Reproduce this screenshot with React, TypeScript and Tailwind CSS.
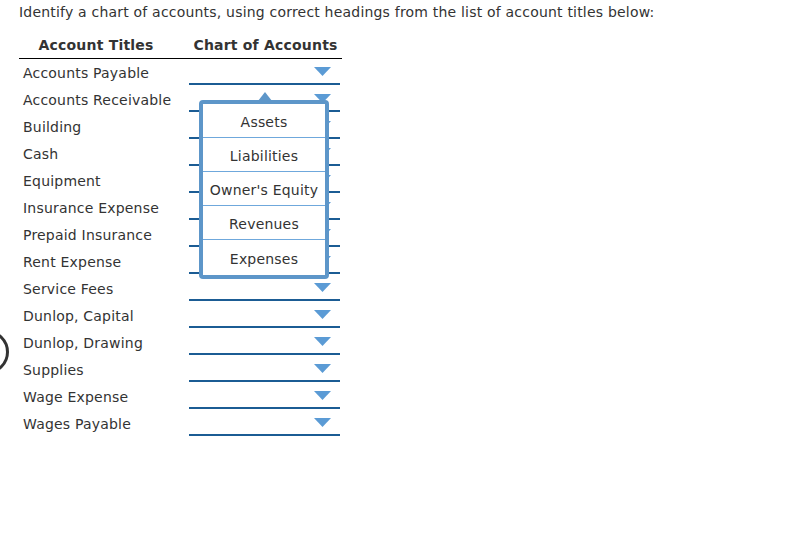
const accounts = [
  "Accounts Payable",
  "Accounts Receivable",
  "Building",
  "Cash",
  "Equipment",
  "Insurance Expense",
  "Prepaid Insurance",
  "Rent Expense",
  "Service Fees",
  "Dunlop, Capital",
  "Dunlop, Drawing",
  "Supplies",
  "Wage Expense",
  "Wages Payable",
];

const options = ["Assets", "Liabilities", "Owner's Equity", "Revenues", "Expenses"];

function Arrow() {
  return (
    <svg className="absolute right-[9px] top-[8px]" width="17" height="9" viewBox="0 0 17 9">
      <polygon points="0,0 17,0 8.5,9" fill="#5b9bd5" />
    </svg>
  );
}

export default function App() {
  return (
    <div
      className="relative h-[557px] w-[795px] overflow-hidden bg-white pl-[19px] pt-[4px] text-[14px] tracking-[0.2px] text-[#333]"
      style={{ fontFamily: '"DejaVu Sans", Verdana, sans-serif' }}
    >
      <p className="h-[16px] leading-[16px]">
        Identify a chart of accounts, using correct headings from the list of account titles below:
      </p>

      <div className="relative mt-[14px] w-[323px]">
        <div className="grid h-[25px] grid-cols-[170px_153px] border-b border-black font-bold leading-[22px]">
          <div className="pr-[16px] text-center">Account Titles</div>
          <div className="text-center">Chart of Accounts</div>
        </div>

        {accounts.map((name) => (
          <div key={name} className="grid h-[27px] grid-cols-[170px_153px]">
            <div className="pl-[4px] pt-[1px] leading-[27px]">{name}</div>
            <div className="relative h-[26px] w-[151px] border-b-2 border-[#1b5c94]">
              <Arrow />
            </div>
          </div>
        ))}

        <div className="absolute left-[180px] top-[66px] w-[130px]">
          <svg className="absolute left-[59px] top-[-8px]" width="14" height="9" viewBox="0 0 14 9">
            <polygon points="0,9 7,0 14,9" fill="#5d96c9" />
          </svg>
          <div className="flex h-[179px] flex-col rounded-[4px] border-4 border-[#5d96c9] bg-white">
            {options.map((opt, i) => (
              <div
                key={opt}
                className={
                  "flex h-[34px] items-center justify-center whitespace-nowrap pt-[3px] " +
                  (i < options.length - 1 ? "border-b border-[#6fa8dc]" : "flex-1")
                }
              >
                {opt}
              </div>
            ))}
          </div>
        </div>
      </div>

      <div className="absolute left-[-35px] top-[330px] h-[44px] w-[44px] rounded-full border-[3px] border-[#333]" />
    </div>
  );
}
